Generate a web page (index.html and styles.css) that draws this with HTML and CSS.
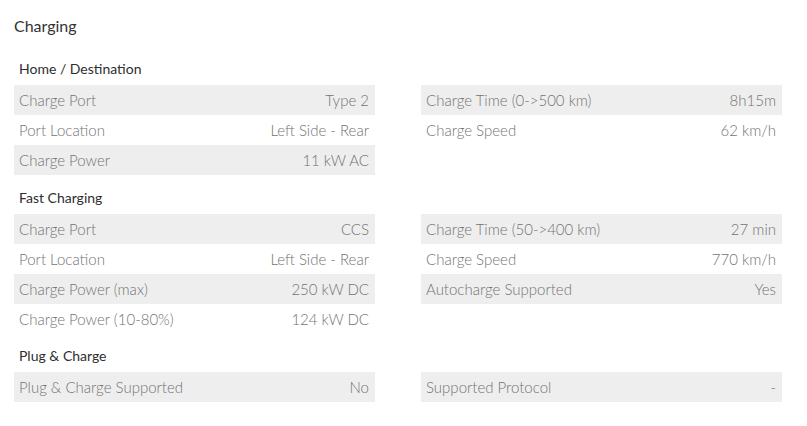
FILE: index.html
```html
<!DOCTYPE html>
<html>
<head>
<meta charset="utf-8">
<link rel="stylesheet" href="styles.css">
</head>
<body>
<div class="page">
  <h2 class="title">Charging</h2>

  <section class="group">
    <h3 class="group-title">Home / Destination</h3>
    <div class="cols">
      <div class="col">
        <div class="row"><span>Charge Port</span><span>Type 2</span></div>
        <div class="row"><span>Port Location</span><span>Left Side - Rear</span></div>
        <div class="row"><span>Charge Power</span><span>11 kW AC</span></div>
      </div>
      <div class="col">
        <div class="row"><span>Charge Time (0-&gt;500 km)</span><span>8h15m</span></div>
        <div class="row"><span>Charge Speed</span><span>62 km/h</span></div>
      </div>
    </div>
  </section>

  <section class="group">
    <h3 class="group-title">Fast Charging</h3>
    <div class="cols">
      <div class="col">
        <div class="row"><span>Charge Port</span><span>CCS</span></div>
        <div class="row"><span>Port Location</span><span>Left Side - Rear</span></div>
        <div class="row"><span>Charge Power (max)</span><span>250 kW DC</span></div>
        <div class="row"><span>Charge Power (10-80%)</span><span>124 kW DC</span></div>
      </div>
      <div class="col">
        <div class="row"><span>Charge Time (50-&gt;400 km)</span><span>27 min</span></div>
        <div class="row"><span>Charge Speed</span><span>770 km/h</span></div>
        <div class="row"><span>Autocharge Supported</span><span>Yes</span></div>
      </div>
    </div>
  </section>

  <section class="group">
    <h3 class="group-title">Plug &amp; Charge</h3>
    <div class="cols">
      <div class="col">
        <div class="row"><span>Plug &amp; Charge Supported</span><span>No</span></div>
      </div>
      <div class="col">
        <div class="row"><span>Supported Protocol</span><span>-</span></div>
      </div>
    </div>
  </section>
</div>
</body>
</html>
```

FILE: styles.css
```css
html, body {
  margin: 0;
  padding: 0;
  background: #ffffff;
}

.page {
  padding: 14px 25px 0 14px;
  font-family: Lato, "Open Sans", sans-serif;
}

.title {
  margin: 0;
  padding-bottom: 9px;
  font-size: 16px;
  line-height: 24px;
  font-weight: 400;
  color: #333333;
}

.group-title {
  margin: 12px 0 6px 0;
  padding-left: 5px;
  font-size: 14px;
  line-height: 20px;
  font-weight: 400;
  color: #2e2e2e;
}

.group + .group .group-title {
  margin-top: 12.5px;
}

.cols {
  display: grid;
  grid-template-columns: 361px 361px;
  column-gap: 46px;
}

.row {
  display: flex;
  justify-content: space-between;
  align-items: center;
  height: 30px;
  padding: 0 6px 0 5px;
  font-size: 15px;
  font-weight: 300;
  color: #737373;
}

.col .row:nth-child(odd) {
  background: #eeeeee;
}
```
